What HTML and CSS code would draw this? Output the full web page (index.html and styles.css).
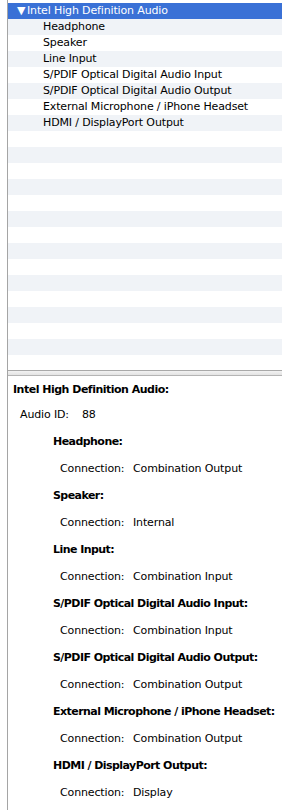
FILE: index.html
```html
<!DOCTYPE html>
<html>
<head>
<meta charset="utf-8">
<link rel="stylesheet" href="styles.css">
</head>
<body>
<div class="window">
  <div class="outline">
    <div class="row group"><span class="disclosure">▼</span>Intel High Definition Audio</div>
    <div class="row child">Headphone</div>
    <div class="row child">Speaker</div>
    <div class="row child">Line Input</div>
    <div class="row child">S/PDIF Optical Digital Audio Input</div>
    <div class="row child">S/PDIF Optical Digital Audio Output</div>
    <div class="row child">External Microphone / iPhone Headset</div>
    <div class="row child">HDMI / DisplayPort Output</div>
  </div>
  <div class="splitter"></div>
  <div class="detail">
    <div class="title">Intel High Definition Audio:</div>
    <div class="prop top"><span class="key">Audio ID:</span><span class="val">88</span></div>
    <div class="section">Headphone:</div>
    <div class="prop sub"><span class="key">Connection:</span><span class="val">Combination Output</span></div>
    <div class="section">Speaker:</div>
    <div class="prop sub"><span class="key">Connection:</span><span class="val">Internal</span></div>
    <div class="section">Line Input:</div>
    <div class="prop sub"><span class="key">Connection:</span><span class="val">Combination Input</span></div>
    <div class="section">S/PDIF Optical Digital Audio Input:</div>
    <div class="prop sub"><span class="key">Connection:</span><span class="val">Combination Input</span></div>
    <div class="section">S/PDIF Optical Digital Audio Output:</div>
    <div class="prop sub"><span class="key">Connection:</span><span class="val">Combination Output</span></div>
    <div class="section">External Microphone / iPhone Headset:</div>
    <div class="prop sub"><span class="key">Connection:</span><span class="val">Combination Output</span></div>
    <div class="section">HDMI / DisplayPort Output:</div>
    <div class="prop sub"><span class="key">Connection:</span><span class="val">Display</span></div>
  </div>
</div>
</body>
</html>
```
FILE: styles.css
```css
html, body {
  margin: 0;
  padding: 0;
  background: #fff;
}
body {
  width: 282px;
  height: 810px;
  overflow: hidden;
  font-family: "DejaVu Sans", "Lucida Grande", sans-serif;
  font-size: 11px;
  letter-spacing: -0.14px;
  color: #000;
}
.window {
  margin-left: 7px;
  border-left: 1px solid #a5a5a5;
  height: 810px;
  display: flex;
  flex-direction: column;
}
.outline {
  height: 370px;
  padding-top: 3px;
  box-sizing: border-box;
  background-color: #fff;
  position: relative;
  overflow: hidden;
}
.outline::before {
  content: "";
  position: absolute;
  left: 0; right: 0; top: 19px; bottom: 0;
  background: repeating-linear-gradient(#f0f3f7 0 16px, #fff 16px 32px);
}
.row {
  position: relative;
  height: 16px;
  line-height: 16px;
  white-space: nowrap;
}
.group {
  background: #3a71d6;
  color: #fff;
  padding-left: 9px;
}
.disclosure {
  display: inline-block;
  width: 10px;
  font-size: 11px;
  letter-spacing: 0;
}
.child {
  padding-left: 35px;
}
.splitter {
  height: 6px;
  box-sizing: border-box;
  border-top: 1px solid #a9a9a9;
  border-bottom: 1px solid #b5b5b5;
  background: linear-gradient(#f2f2f2, #e3e3e3);
}
.detail {
  flex: 1;
  padding-top: 2px;
  white-space: nowrap;
}
.title {
  font-weight: bold;
  letter-spacing: -0.5px;
  line-height: 23px;
  padding-left: 5px;
}
.prop, .section {
  line-height: 27px;
  height: 27px;
}
.section {
  font-weight: bold;
  letter-spacing: -0.55px;
  padding-left: 45px;
}
.prop.top {
  padding-left: 12px;
}
.prop.sub {
  padding-left: 52px;
}
.key {
  display: inline-block;
}
.top .key { width: 62px; }
.sub .key { width: 73px; }
```
